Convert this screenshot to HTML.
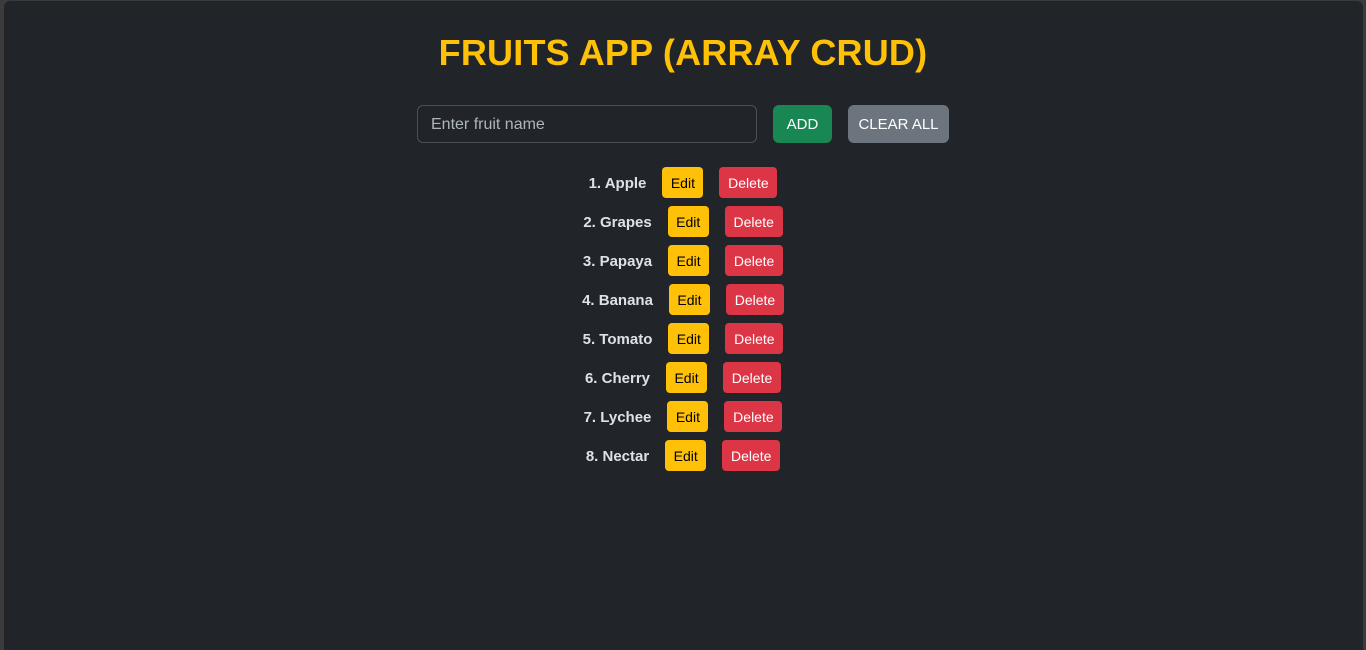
<!DOCTYPE html>
<html><head><style>
html,body{margin:0;padding:0}
body{width:1366px;height:650px;background:#3b3b3b;font-family:"Liberation Sans",sans-serif;overflow:hidden}
.frame{position:absolute;left:4px;top:1px;right:3px;bottom:0;background:#212529;border-radius:6px 6px 0 0}
h1{position:absolute;left:0;right:0;top:31px;margin:0;text-align:center;color:#ffc107;font-size:36px;font-weight:bold;line-height:44px;letter-spacing:0.2px}
.form{position:absolute;left:417px;top:105px;display:flex;gap:16px}
.inp{width:325px;height:36px;border:1px solid #495057;border-radius:6px;color:#adb5bd;font-size:16px;line-height:38px;padding-left:13px;box-sizing:content-box}
.btn{height:38px;line-height:40px;border-radius:6px;color:#fff;font-size:15px;text-align:center}
.add{width:59px;background:#198754}
.clr{width:101px;background:#6c757d}
.row{position:absolute;left:0;width:1366px;display:flex;justify-content:center;align-items:center;gap:16px;height:31px}
.lbl{color:#dee2e6;font-weight:bold;font-size:15px;position:relative;top:1px}
.e,.d{height:31px;line-height:33px;border-radius:4px;font-size:14px;text-align:center}
.e{width:41px;background:#ffc107;color:#000}
.d{width:58px;background:#dc3545;color:#fff}
</style></head><body>
<div class="frame"></div>
<h1>FRUITS APP (ARRAY CRUD)</h1>
<div class="form"><div class="inp">Enter fruit name</div><div class="btn add">ADD</div><div class="btn clr">CLEAR ALL</div></div>
<div class="row" style="top:167px"><span class="lbl">1. Apple</span><span class="e">Edit</span><span class="d">Delete</span></div>
<div class="row" style="top:206px"><span class="lbl">2. Grapes</span><span class="e">Edit</span><span class="d">Delete</span></div>
<div class="row" style="top:245px"><span class="lbl">3. Papaya</span><span class="e">Edit</span><span class="d">Delete</span></div>
<div class="row" style="top:284px"><span class="lbl">4. Banana</span><span class="e">Edit</span><span class="d">Delete</span></div>
<div class="row" style="top:323px"><span class="lbl">5. Tomato</span><span class="e">Edit</span><span class="d">Delete</span></div>
<div class="row" style="top:362px"><span class="lbl">6. Cherry</span><span class="e">Edit</span><span class="d">Delete</span></div>
<div class="row" style="top:401px"><span class="lbl">7. Lychee</span><span class="e">Edit</span><span class="d">Delete</span></div>
<div class="row" style="top:440px"><span class="lbl">8. Nectar</span><span class="e">Edit</span><span class="d">Delete</span></div>
</body></html>
